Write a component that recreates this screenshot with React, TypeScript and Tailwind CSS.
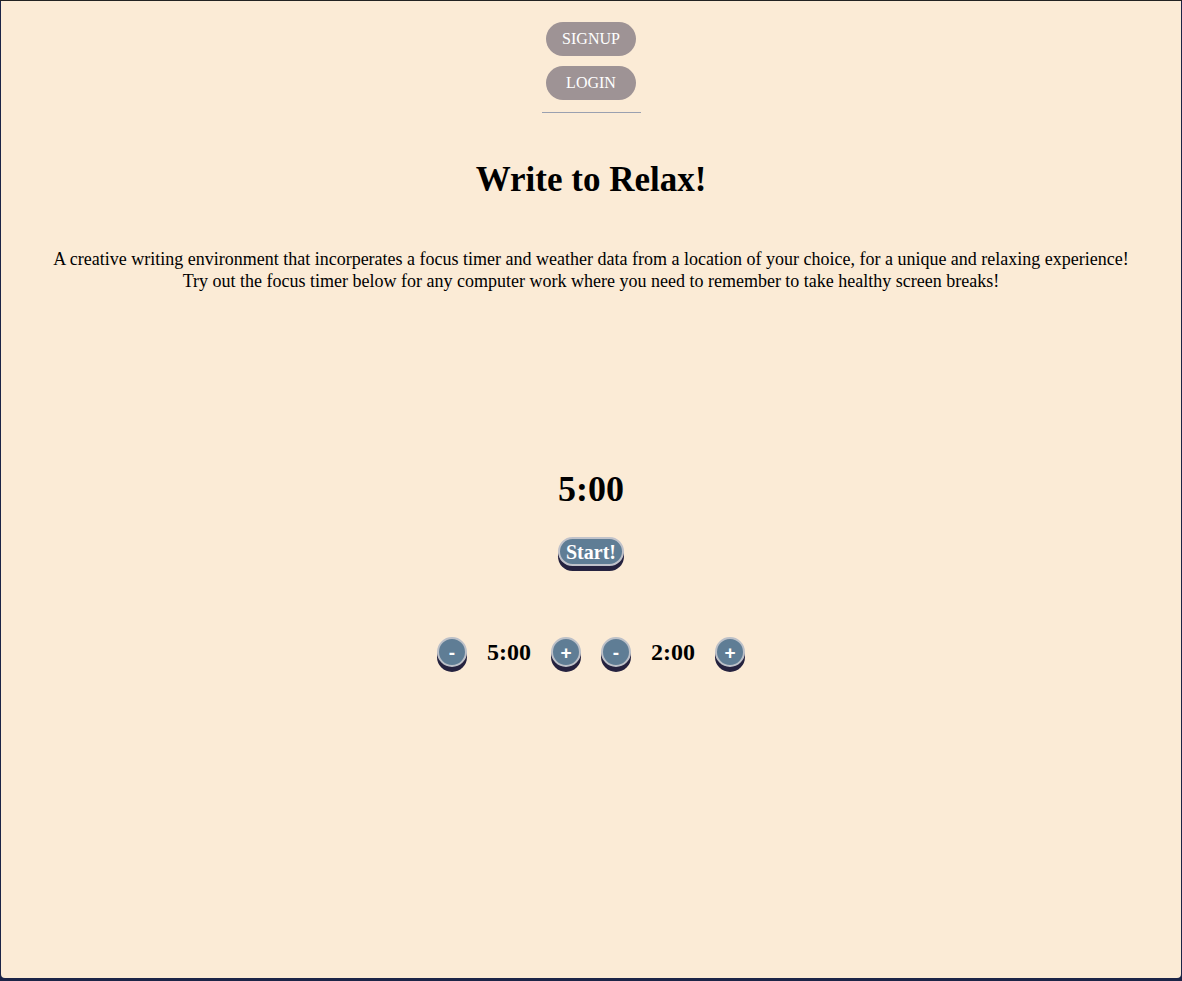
import React from 'react'

const serif = { fontFamily: '"Liberation Serif", "Times New Roman", serif' }

function RoundButton({ label }: { label: string }) {
  return (
    <button className="w-[30px] h-[30px] rounded-full bg-[#5f7d95] border-2 border-[#bcc0c8] shadow-[0_5px_0_#25223f] text-white font-bold text-[19px] leading-none flex items-center justify-center font-['Liberation_Sans',Arial,sans-serif]">
      {label}
    </button>
  )
}

export default function App() {
  return (
    <div className="min-h-[981px] bg-[#1b2447] border-t border-[#222] flex flex-col" style={serif}>
      <div className="h-[977px] bg-[#fbebd6] rounded-b-[4px] mx-px flex flex-col items-center text-black">
        {/* Nav */}
        <div className="flex flex-col items-center gap-[10px] pt-[21px]">
          <button className="w-[90px] h-[34px] rounded-full bg-[#9e9395] text-white text-[16px]">SIGNUP</button>
          <button className="w-[90px] h-[34px] rounded-full bg-[#9e9395] text-white text-[16px]">LOGIN</button>
        </div>
        <div className="w-[99px] h-px bg-[#9aa0b0] mt-[12px]" />

        <h1 className="text-[35px] font-bold mt-[45px] leading-[44px]">Write to Relax!</h1>

        <div className="text-[18px] leading-[22px] text-center mt-[46px]">
          <p>A creative writing environment that incorperates a focus timer and weather data from a location of your choice, for a unique and relaxing experience!</p>
          <p>Try out the focus timer below for any computer work where you need to remember to take healthy screen breaks!</p>
        </div>

        {/* Timer */}
        <div className="text-[36px] font-bold leading-[44px] mt-[175px]">5:00</div>
        <button className="mt-[26px] w-[66px] h-[29px] rounded-full bg-[#5f7d95] border-2 border-[#c0c2ca] shadow-[0_5px_0_#25223f] text-white font-bold text-[20px] leading-none flex items-center justify-center">
          Start!
        </button>

        <div className="flex items-center gap-[20px] mt-[68px]">
          <RoundButton label="-" />
          <span className="text-[24px] font-bold">5:00</span>
          <RoundButton label="+" />
          <RoundButton label="-" />
          <span className="text-[24px] font-bold">2:00</span>
          <RoundButton label="+" />
        </div>
      </div>
    </div>
  )
}
